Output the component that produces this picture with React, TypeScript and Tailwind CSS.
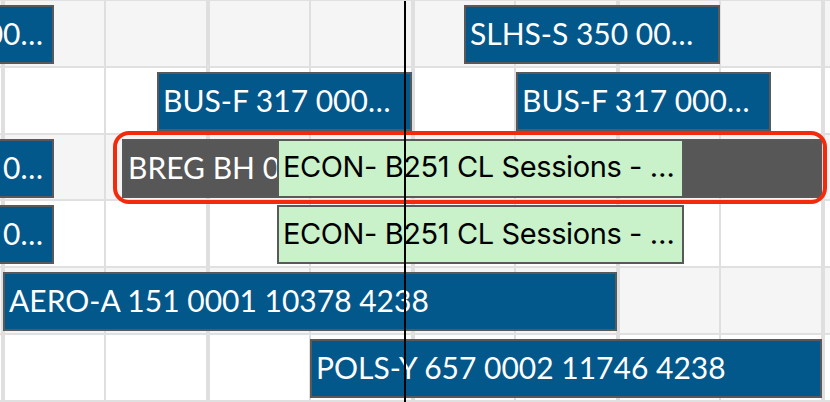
import React from "react";

type Ev = {
  left: number;
  width: number;
  text: string;
  kind: "blue" | "gray" | "green";
  clipLeft?: boolean;
};

type Row = { bg: string; events: Ev[] };

const rows: Row[] = [
  {
    bg: "bg-[#f5f5f5]",
    events: [
      { left: -200, width: 254, text: "PSYC-P 100 00…", kind: "blue", clipLeft: true },
      { left: 464, width: 256, text: "SLHS-S 350 00…", kind: "blue" },
    ],
  },
  {
    bg: "bg-white",
    events: [
      { left: 157, width: 255, text: "BUS-F 317 000…", kind: "blue" },
      { left: 516, width: 255, text: "BUS-F 317 000…", kind: "blue" },
    ],
  },
  {
    bg: "bg-[#f5f5f5]",
    events: [
      { left: -200, width: 254, text: "AERO-A 15 0…", kind: "blue", clipLeft: true },
      { left: 122, width: 700, text: "BREG BH 0012 CL Sessions", kind: "gray" },
      { left: 277, width: 407, text: "ECON- B251 CL Sessions - …", kind: "green" },
    ],
  },
  {
    bg: "bg-white",
    events: [
      { left: -200, width: 254, text: "AERO-A 15 0…", kind: "blue", clipLeft: true },
      { left: 277, width: 407, text: "ECON- B251 CL Sessions - …", kind: "green" },
    ],
  },
  {
    bg: "bg-[#f5f5f5]",
    events: [{ left: 3, width: 614, text: "AERO-A 151 0001 10378 4238", kind: "blue" }],
  },
  {
    bg: "bg-white",
    events: [{ left: 310, width: 512, text: "POLS-Y 657 0002 11746 4238", kind: "blue" }],
  },
];

const kindClass = {
  blue: "bg-[#02578b] text-white font-['Lato',sans-serif] text-[30px]",
  gray: "bg-[#575757] text-white font-['Lato',sans-serif] text-[30px]",
  green: "bg-[#c9f1ca] text-black font-['Inter',sans-serif] text-[29px] tracking-[-0.4px]",
};

function Event({ ev }: { ev: Ev }) {
  return (
    <div
      className={`absolute top-[4px] flex h-[59px] items-center overflow-hidden border-2 border-[#595959] ${kindClass[ev.kind]} ${
        ev.clipLeft ? "justify-end pr-[9px]" : "pl-[4px] pr-[6px]"
      }`}
      style={{ left: ev.left, width: ev.width }}
    >
      <span className="whitespace-nowrap pb-[3px] leading-none">{ev.text}</span>
    </div>
  );
}

export default function App() {
  return (
    <div className="relative h-[402px] w-[830px] overflow-hidden border-t border-[#e0e0e0] bg-white">
      {rows.map((row, i) => (
        <div key={i} className={`relative h-[66.8px] border-b-2 border-[#e0e0e0] ${row.bg}`}>
          {/* half-hour grid */}
          <div className="flex h-full pl-[1px]">
            {Array.from({ length: 9 }).map((_, c) => (
              <div
                key={c}
                className={`h-full w-[102.5px] shrink-0 border-[#dfdfdf] ${c % 2 === 0 ? "border-l-4" : "border-l-2"}`}
              />
            ))}
          </div>
          {row.events.map((ev, j) => (
            <Event key={j} ev={ev} />
          ))}
          {i === 2 && (
            <div className="absolute left-[113px] top-[-4px] z-10 h-[73px] w-[714px] rounded-[16px] border-[4px] border-[#f42a0c]" />
          )}
        </div>
      ))}
      {/* now line */}
      <div className="absolute bottom-0 left-[404px] top-0 z-20 w-[2px] bg-black" />
    </div>
  );
}
